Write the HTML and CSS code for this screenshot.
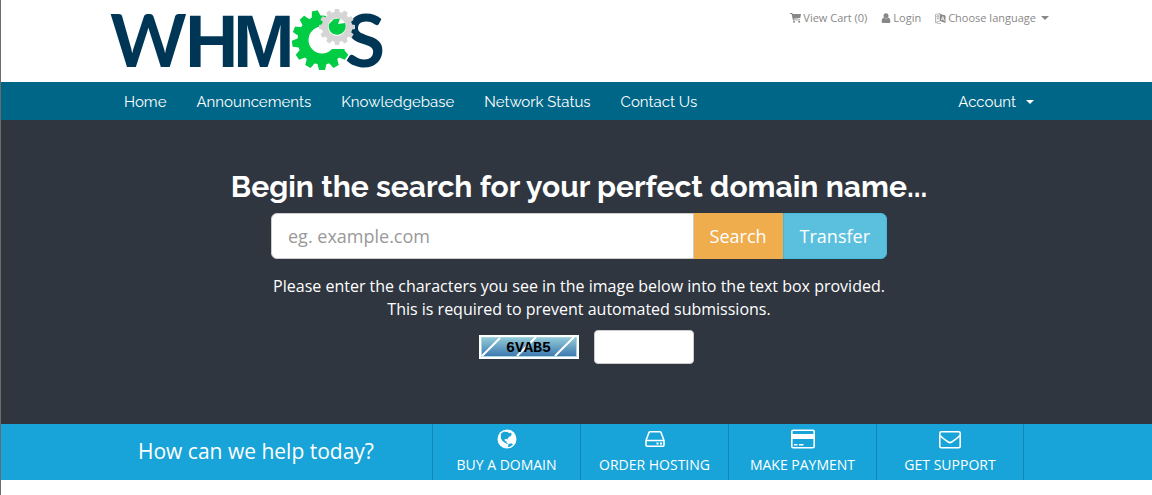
FILE: index.html
```html
<!DOCTYPE html>
<html lang="en">
<head>
<meta charset="utf-8">
<title>WHMCS</title>
<link rel="stylesheet" href="styles.css">
</head>
<body>
<header class="band header">
  <div class="container header-row">
    <a class="logo" href="#" aria-label="WHMCS">
      <svg width="280" height="82" viewBox="0 0 280 82">
        <defs>
          <path id="tooth" d="M-5 -22L-3 -30H3L5 -22Z"/>
          <path id="cog" d="M-3 -13L-2 -18H2L3 -13Z"/>
          <clipPath id="open"><path d="M170 0H217V49H265V82H170Z"/></clipPath>
        </defs>
        <text class="logo-text" x="1" y="67">W</text>
        <text class="logo-text logo-stem" x="76" y="67">H</text>
        <text class="logo-text logo-stem" x="124" y="67">M</text>
        <text class="logo-text" x="236" y="67">S</text>
        <g class="gear" clip-path="url(#open)">
          <g transform="translate(213 40)">
            <circle class="gear-ring" r="19"/>
            <use href="#tooth" transform="rotate(180)"/><use href="#tooth" transform="rotate(208)"/>
            <use href="#tooth" transform="rotate(235)"/><use href="#tooth" transform="rotate(263)"/>
            <use href="#tooth" transform="rotate(291)"/><use href="#tooth" transform="rotate(318)"/>
            <use href="#tooth" transform="rotate(346)"/><use href="#tooth" transform="rotate(152)"/>
            <use href="#tooth" transform="rotate(125)"/>
          </g>
        </g>
        <g transform="translate(228 27)">
          <circle r="15" fill="#fff"/>
          <circle class="cog-ring" r="12"/>
          <g fill="#d5d5d5">
            <use href="#cog"/><use href="#cog" transform="rotate(30)"/><use href="#cog" transform="rotate(60)"/>
            <use href="#cog" transform="rotate(90)"/><use href="#cog" transform="rotate(120)"/><use href="#cog" transform="rotate(150)"/>
            <use href="#cog" transform="rotate(180)"/><use href="#cog" transform="rotate(210)"/><use href="#cog" transform="rotate(240)"/>
            <use href="#cog" transform="rotate(270)"/><use href="#cog" transform="rotate(300)"/><use href="#cog" transform="rotate(330)"/>
          </g>
          <path fill="#00cc44" d="M-3 -8L3 -8.500L1 -3L8 -4A8.500 8.500 0 1 1 -8 -3Q-6 -5 -3 -8Z"/>
        </g>
      </svg>
    </a>
    <nav class="top-nav" aria-label="Account tools">
      <a href="#"><svg width="11" height="10" viewBox="0 0 11 10"><path fill="currentColor" d="M0 0H2.300L2.700 1H11L10.300 5L3.600 5.800L3.700 6.400H10V7.300H2.900L1.600 1H0Z"/><circle cx="4" cy="8.700" r="1" fill="currentColor"/><circle cx="9.200" cy="8.700" r="1" fill="currentColor"/></svg>View Cart (0)</a>
      <a href="#"><svg width="10" height="10" viewBox="0 0 10 10"><circle cx="5" cy="2.700" r="2.500" fill="currentColor"/><path fill="currentColor" d="M2.500 4.500Q5 6.500 7.500 4.500Q9.400 5.300 9.400 8.500Q9.300 10 8 10H2Q.7 10 .6 8.500Q.6 5.300 2.500 4.500Z"/></svg>Login</a>
      <button type="button"><svg width="11" height="11" viewBox="0 0 11 11"><path fill="none" stroke="currentColor" stroke-width=".6" d="M.5 1.500L5 .5V8L.5 9.500ZM1.300 3.500L4 2.700M2.600 2.300V3.200M1.500 6.500Q3 5.800 3.600 3.200M1.600 4.500Q2.500 5.500 4 6M1 9.500Q3 11 6 10.500"/><path fill="currentColor" d="M5 1L10.500 2.500V10L5 8Z"/><path fill="none" stroke="#fff" stroke-width=".8" d="M6.300 7.200L7.800 3.500L9.300 8M6.800 5.900L8.700 6.500"/></svg>Choose language<span class="caret"></span></button>
    </nav>
  </div>
</header>
<nav class="band main-nav" aria-label="Main">
  <div class="container main-row">
    <a href="#">Home</a>
    <a href="#">Announcements</a>
    <a href="#">Knowledgebase</a>
    <a href="#">Network Status</a>
    <a href="#">Contact Us</a>
    <button class="account" type="button">Account<span class="caret"></span></button>
  </div>
</nav>
<main class="band banner">
  <form class="container search">
    <h1>Begin the search for your perfect domain name...</h1>
    <div class="search-group">
      <input type="text" aria-label="Domain name" placeholder="eg. example.com">
      <button class="btn-search" type="submit">Search</button>
      <button class="btn-transfer" type="submit">Transfer</button>
    </div>
    <label class="hint" for="code">Please enter the characters you see in the image below into the text box provided. This is required to prevent automated submissions.</label>
    <div class="captcha">
      <svg width="100" height="24" viewBox="0 0 100 24" role="img">
        <defs><linearGradient id="sky" x1="0" y1="0" x2="0" y2="1"><stop offset="0" stop-color="#92cbd8"/><stop offset="1" stop-color="#3c78b0"/></linearGradient></defs>
        <path fill="#fff" d="M0 0H100V24H0Z"/>
        <path fill="url(#sky)" stroke="#a9d3df" d="M2.500 2.500H97.500V21.500H2.500Z"/>
        <path stroke="#fff" stroke-width="2" d="M3 21L21 3M38 21L57 2M76 21L95 2"/>
        <text class="captcha-text" x="27" y="17">6VAB5</text>
      </svg>
      <input id="code" type="text">
    </div>
  </form>
</main>
<section class="band help">
  <div class="container help-row">
    <h2>How can we help today?</h2>
    <a href="#"><svg width="20" height="20" viewBox="0 0 20 20"><circle cx="10" cy="10" r="9.500" fill="#fff"/><path fill="#18a4d8" d="M4 4.500L7 2.500L9 3L10.500 2.800L12 4.200L13.500 3.500L15 5.500L13.500 6L14.500 7L12.500 7.500L11 9L10.500 10.500L9.500 9.800L7.500 10.500L8 12.200L9.500 12L9.300 13.500L11 14.500L10 15L7.500 13.500L5.500 12L4 9.500L3.800 7ZM11.500 15L14.500 14.300L16 15.500L13 17.800L11 18.300Z"/></svg>BUY A DOMAIN</a>
    <a href="#"><svg width="20" height="20" viewBox="0 0 20 20"><path fill="none" stroke="#fff" stroke-width="1.600" stroke-linejoin="round" d="M1 11.500L4 3.500Q4.300 2.800 5 2.800H15Q15.700 2.800 16 3.500L19 11.500V16Q19 17.200 17.800 17.200H2.200Q1 17.200 1 16ZM1 11.500H19"/><path fill="#fff" d="M11.500 13.500h2v2h-2ZM15 13.500h2v2h-2Z"/></svg>ORDER HOSTING</a>
    <a href="#"><svg width="24" height="20" viewBox="0 0 24 20"><rect x=".8" y="1.300" width="22.400" height="17.400" rx="1.500" fill="none" stroke="#fff" stroke-width="1.600"/><path fill="#fff" d="M1 5H23V10H1ZM3 15H6.500V16.500H3ZM8 15H12.500V16.500H8Z"/></svg>MAKE PAYMENT</a>
    <a href="#"><svg width="24" height="20" viewBox="0 0 24 20"><rect x="1.800" y="2.800" width="20.400" height="15.900" rx="1.500" fill="none" stroke="#fff" stroke-width="1.600"/><path fill="none" stroke="#fff" stroke-width="1.600" d="M2 6.500Q5 9.500 9 12.200Q12 15 15 12.200Q19 9.500 22 6.500"/></svg>GET SUPPORT</a>
  </div>
</section>
</body>
</html>
```
FILE: styles.css
```css
* { box-sizing: border-box; }
html { background: #fff; }
body {
  margin: 0;
  min-height: 100vh;
  border-left: 1px solid #6b6b6b;
  font-family: "Open Sans", "Liberation Sans", sans-serif;
}
a { color: inherit; text-decoration: none; }
button { border: 0; padding: 0; background: none; color: inherit; font: inherit; cursor: pointer; }
svg { display: block; overflow: visible; }
.band { padding-left: 5px; }
.container { max-width: 940px; margin: 0 auto; }
.caret {
  display: inline-block;
  border: 4px solid transparent;
  border-top-color: currentColor;
  border-bottom: 0;
}

.header-row { display: flex; justify-content: space-between; align-items: flex-start; }
.logo-text { font: 700 73px Lato, sans-serif; fill: #003655; }
.logo-stem { font: 700 74px "Liberation Sans", sans-serif; }
.gear { fill: #00cc44; }
.gear-ring { fill: none; stroke: #00cc44; stroke-width: 11; }
.cog-ring { fill: none; stroke: #d5d5d5; stroke-width: 6; }
.top-nav { display: flex; gap: 14px; padding-top: 10px; font-size: 11px; line-height: 16px; color: #888; }
.top-nav a, .top-nav button { display: flex; align-items: center; gap: 2px; }
.top-nav .caret { margin-left: 3px; }

.main-nav { background: #006687; color: #fff; }
.main-row {
  display: flex;
  gap: 30px;
  padding: 10px 15px 8px;
  font: 15px/20px Raleway, Lato, sans-serif;
}
.account { display: flex; align-items: center; gap: 10px; margin-left: auto; }

.banner { background: #2f3640; color: #fff; }
.search { display: flex; flex-direction: column; align-items: center; padding: 50px 0 60px; }
h1 { margin: 0 0 10px; font: 700 30px/33px Raleway, Lato, sans-serif; }
.search-group { display: flex; width: 100%; max-width: 616px; height: 46px; font-size: 18px; }
.search-group input {
  flex: 1;
  min-width: 0;
  padding: 0 16px;
  border: 1px solid #ccc;
  border-radius: 6px 0 0 6px;
  font: inherit;
}
.search-group input::placeholder { color: #999; }
.search-group button { padding: 0 16px; }
.search-group .btn-search { background: #f0ad4e; }
.search-group .btn-transfer { background: #5bc0de; border: 1px solid #46b8da; border-radius: 0 6px 6px 0; }
.hint { max-width: 640px; margin: 16px 0 9px; font-size: 16px; line-height: 23px; text-align: center; }
.captcha { display: flex; align-items: center; gap: 15px; margin-left: 15px; }
.captcha-text { font: 700 15px "Liberation Mono", monospace; fill: #000; }
.captcha input { width: 100px; height: 34px; padding: 6px 12px; border: 1px solid #ccc; border-radius: 4px; font: inherit; }

.help { background: #18a4d8; color: #fff; }
.help-row { display: grid; grid-template-columns: 323px repeat(3, 148px) 148px; min-height: 56px; }
h2 { margin: 0; padding-left: 29px; font-size: 21px; font-weight: 400; line-height: 54px; }
.help a {
  display: flex;
  flex-direction: column;
  align-items: center;
  gap: 6px;
  padding-top: 5px;
  border-left: 1px solid #1187b7;
  font-size: 14px;
  line-height: 20px;
}
.help a:last-child { border-right: 1px solid #1187b7; }
```
